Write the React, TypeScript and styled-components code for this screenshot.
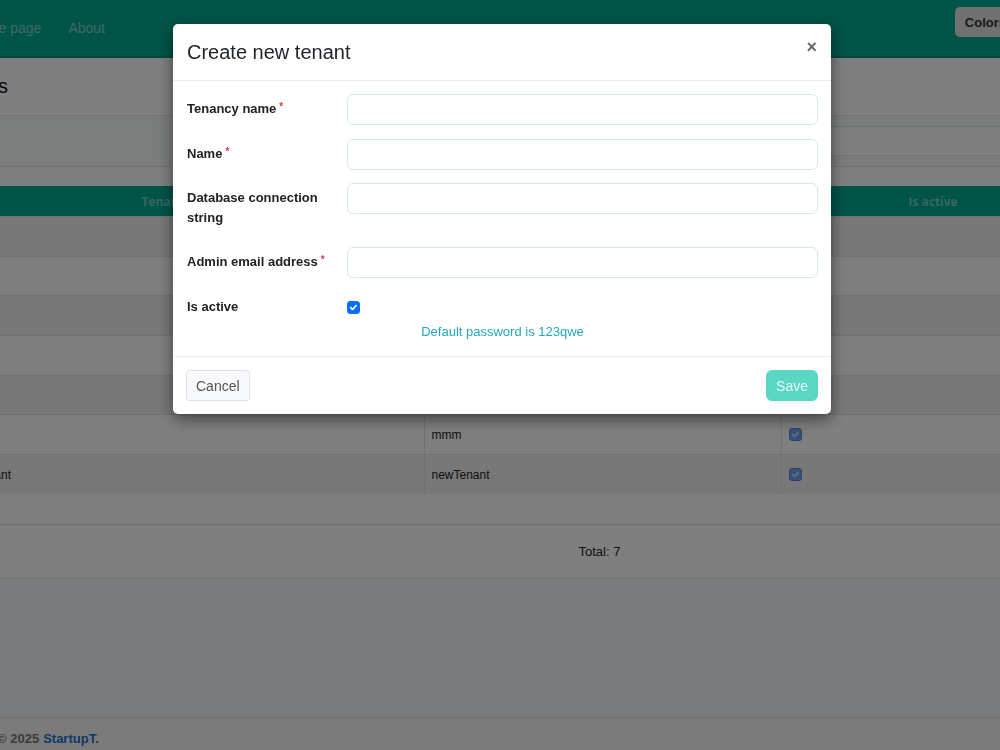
import React from "react";
import styled, { createGlobalStyle } from "styled-components";

const GlobalStyle = createGlobalStyle`
  html, body {
    margin: 0;
    padding: 0;
    overflow: hidden;
    font-family: "Liberation Sans", Arial, sans-serif;
    color: #212529;
  }
`;

const teal = "#00a890";

const Viewport = styled.div`
  width: 1000px;
  height: 750px;
  overflow: hidden;
  position: relative;
`;

const Page = styled.div`
  margin-left: -80px;
  width: 1183px;
  min-height: 750px;
  display: flex;
  flex-direction: column;
  background: #f3f6f8;
`;

const Navbar = styled.nav`
  height: 56px;
  background: ${teal};
  border-bottom: 2px solid #008f7a;
  display: flex;
  align-items: center;
  padding: 0 87px 0 49px;
`;

const NavLink = styled.a`
  font-size: 14px;
  color: rgba(255, 255, 255, 0.5);
  margin-right: 27px;
  text-decoration: none;
`;

const ColorsButton = styled.button`
  margin-left: auto;
  margin-top: -12px;
  height: 30px;
  padding: 0 10px;
  border: none;
  border-radius: 5px;
  background: #e2e2e2;
  font-family: "Liberation Sans", Arial, sans-serif;
  font-weight: bold;
  font-size: 13px;
  color: #333;
`;

const Main = styled.main`
  flex: 1;
  padding: 0 18px;
  background: #fff;
  display: flex;
  flex-direction: column;
`;

const Title = styled.h2`
  margin: 0;
  height: 57px;
  display: flex;
  align-items: center;
  font-size: 20px;
  font-weight: normal;
  color: #111;
`;

const FilterCard = styled.div`
  height: 50px;
  border-top: 1px solid #e4e8e8;
  border-bottom: 1px solid #e4e8e8;
  background: #f6fbfa;
  display: flex;
  align-items: center;
  justify-content: flex-end;
  padding-right: 12px;
`;

const SearchInput = styled.input`
  width: 243px;
  height: 30px;
  box-sizing: border-box;
  border: 1px solid #e0e6e6;
  border-radius: 4px;
  background: #fff;
`;

const Table = styled.table`
  margin: 19px 0 0 8px;
  width: 1139px;
  border-collapse: collapse;
  table-layout: fixed;
  font-size: 12px;
`;

const HeadCell = styled.th<{ $w: number }>`
  width: ${(p) => p.$w}px;
  height: 30px;
  padding: 0;
  background: ${teal};
  color: rgba(255, 255, 255, 0.45);
  font-family: "Open Sans", sans-serif;
  font-weight: 700;
  font-size: 12px;
  text-align: center;
`;

const Row = styled.tr<{ $striped: boolean }>`
  height: 39.7px;
  background: ${(p) => (p.$striped ? "#f0f0f0" : "#fff")};
  border-top: 1px solid #e4e4e4;
`;

const Cell = styled.td`
  padding: 0 7px;
  border-right: 1px solid #e4e4e4;
  color: #222;
  vertical-align: middle;
`;

const EmptyRow = styled.div`
  height: 30px;
  border-bottom: 1px solid #e0e0e0;
`;

const TotalBar = styled.div`
  height: 53px;
  border-bottom: 1px solid #cfe9e6;
  display: flex;
  align-items: center;
  justify-content: center;
  padding-left: 176px;
  font-size: 13px;
  color: #222;
`;

const Filler = styled.div`
  flex: 1;
  margin: 0 -18px;
  background: #f3f6f8;
`;

const Footer = styled.footer`
  height: 33px;
  border-top: 1px solid #dcdcdc;
  background: #f7f7f7;
  display: flex;
  align-items: center;
  padding-left: 77px;
  padding-top: 8px;
  box-sizing: border-box;
  font-size: 13px;
  font-weight: bold;
  color: #777;
`;

const Brand = styled.span`
  color: #1f6fd0;
  margin-left: 4px;
`;

const Box = styled.span<{ $muted?: boolean }>`
  display: inline-flex;
  align-items: center;
  justify-content: center;
  width: 13px;
  height: 13px;
  box-sizing: border-box;
  border-radius: 3px;
  background: ${(p) => (p.$muted ? "#6fa3f0" : "#0d6efd")};
  border: 1px solid ${(p) => (p.$muted ? "#4f86d8" : "#0d6efd")};
`;

const Check = ({ muted }: { muted?: boolean }) => (
  <Box $muted={muted}>
    <svg width="9" height="9" viewBox="0 0 10 10">
      <path
        d="M2 5.2l2 2 4-4.4"
        fill="none"
        stroke={muted ? "rgba(255,255,255,0.7)" : "#fff"}
        strokeWidth="1.8"
        strokeLinecap="round"
        strokeLinejoin="round"
      />
    </svg>
  </Box>
);

/* modal */

const Backdrop = styled.div`
  position: fixed;
  inset: 0;
  background: rgba(0, 0, 0, 0.5);
  display: flex;
  justify-content: center;
  align-items: flex-start;
  padding: 24px 0 0 4px;
`;

const Dialog = styled.div`
  width: 658px;
  background: #fff;
  border-radius: 5px;
  box-shadow: 0 5px 15px rgba(0, 0, 0, 0.5);
`;

const DialogHeader = styled.div`
  height: 56px;
  border-bottom: 1px solid #e8eeee;
  display: flex;
  align-items: center;
  justify-content: space-between;
  padding: 0 14px;
`;

const DialogTitle = styled.h4`
  margin: 0;
  font-size: 20px;
  font-weight: normal;
  color: #212529;
`;

const Close = styled.button`
  border: none;
  background: none;
  padding: 0;
  margin-top: -10px;
  font-family: "Liberation Sans", Arial, sans-serif;
  font-size: 18px;
  font-weight: bold;
  color: #000;
  opacity: 0.6;
`;

const DialogBody = styled.div`
  padding: 13px 13px 14px 14px;
`;

const FormRow = styled.div<{ $last?: boolean }>`
  display: grid;
  grid-template-columns: 160px 1fr;
  margin-bottom: ${(p) => (p.$last ? 0 : 11)}px;
`;

const Label = styled.label<{ $last?: boolean }>`
  padding: 5px 20px ${(p) => (p.$last ? 0 : 9)}px 0;
  line-height: 19.5px;
  font-size: 13px;
  font-weight: bold;
  color: #222;
`;

const Req = styled.span`
  color: #dc3545;
  font-size: 10px;
  vertical-align: top;
  margin-left: 3px;
  line-height: 15px;
`;

const Input = styled.input`
  height: 31px;
  box-sizing: border-box;
  width: 100%;
  border: 1px solid #d3ebe7;
  border-radius: 6px;
  background: #fff;
`;

const CheckWrap = styled.div`
  padding-top: 6px;
`;

const Hint = styled.div`
  margin-top: 6px;
  text-align: center;
  font-size: 13px;
  line-height: 20px;
  color: #23a8b9;
`;

const DialogFooter = styled.div`
  border-top: 1px solid #e8eeee;
  padding: 13px;
  display: flex;
  justify-content: space-between;
`;

const Button = styled.button<{ $primary?: boolean }>`
  height: 31px;
  padding: 0 9px;
  border-radius: ${(p) => (p.$primary ? 6 : 3)}px;
  font-family: "Liberation Sans", Arial, sans-serif;
  font-size: 14px;
  border: 1px solid ${(p) => (p.$primary ? "#5ad6c5" : "#dee2e6")};
  background: ${(p) => (p.$primary ? "#5ad6c5" : "#f8f9fa")};
  color: ${(p) => (p.$primary ? "rgba(255,255,255,0.85)" : "#555")};
`;

const tenants = [
  { tenancy: "Default", name: "Default" },
  { tenancy: "test", name: "test" },
  { tenancy: "abc", name: "abc" },
  { tenancy: "demo", name: "demo" },
  { tenancy: "tnt", name: "tnt" },
  { tenancy: "mmm", name: "mmm" },
  { tenancy: "newTenant", name: "newTenant" },
];

const fields = [
  { label: "Tenancy name", required: true },
  { label: "Name", required: true },
  { label: "Database connection string", required: false },
  { label: "Admin email address", required: true },
];

export default function App() {
  return (
    <Viewport>
      <GlobalStyle />
      <Page>
        <Navbar>
          <NavLink>Home page</NavLink>
          <NavLink>About</NavLink>
          <ColorsButton>Colors</ColorsButton>
        </Navbar>
        <Main>
          <Title>Tenants</Title>
          <FilterCard>
            <SearchInput />
          </FilterCard>
          <Table>
            <thead>
              <tr>
                <HeadCell $w={478}>Tenancy name</HeadCell>
                <HeadCell $w={357}>Name</HeadCell>
                <HeadCell $w={304}>Is active</HeadCell>
              </tr>
            </thead>
            <tbody>
              {tenants.map((t, i) => (
                <Row key={t.tenancy} $striped={i % 2 === 0}>
                  <Cell>{t.tenancy}</Cell>
                  <Cell>{t.name}</Cell>
                  <Cell>
                    <Check muted />
                  </Cell>
                </Row>
              ))}
            </tbody>
          </Table>
          <EmptyRow />
          <TotalBar>Total: 7</TotalBar>
          <Filler />
        </Main>
        <Footer>
          © 2025 <Brand>StartupT.</Brand>
        </Footer>
      </Page>

      <Backdrop>
        <Dialog>
          <DialogHeader>
            <DialogTitle>Create new tenant</DialogTitle>
            <Close>×</Close>
          </DialogHeader>
          <DialogBody>
            {fields.map((f) => (
              <FormRow key={f.label}>
                <Label>
                  {f.label}
                  {f.required && <Req>*</Req>}
                </Label>
                <Input />
              </FormRow>
            ))}
            <FormRow $last>
              <Label $last>Is active</Label>
              <CheckWrap>
                <Check />
              </CheckWrap>
            </FormRow>
            <Hint>Default password is 123qwe</Hint>
          </DialogBody>
          <DialogFooter>
            <Button>Cancel</Button>
            <Button $primary>Save</Button>
          </DialogFooter>
        </Dialog>
      </Backdrop>
    </Viewport>
  );
}
